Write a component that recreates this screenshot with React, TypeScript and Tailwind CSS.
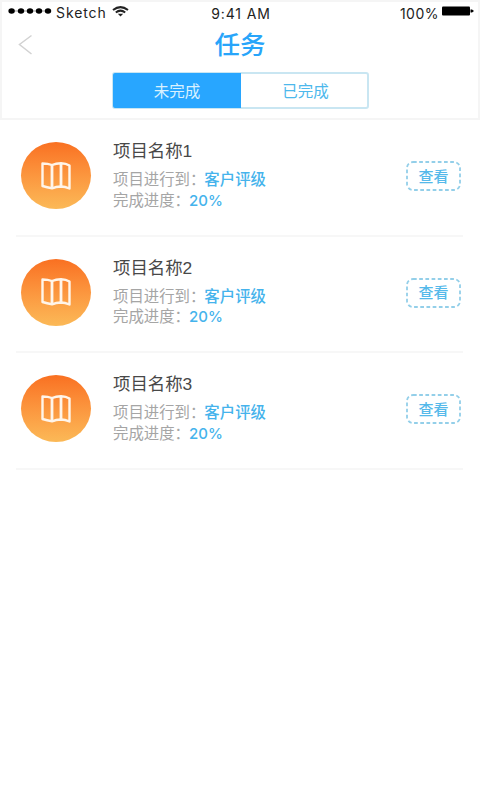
import { useState } from "react";

const tabs = ["未完成", "已完成"];

const projects = [
  { id: 1, name: "项目名称1", stage: "客户评级", progress: 20 },
  { id: 2, name: "项目名称2", stage: "客户评级", progress: 20 },
  { id: 3, name: "项目名称3", stage: "客户评级", progress: 20 },
];

const StatusBar = () => (
  <div className="flex h-[22px] items-center pl-[6px] pr-[4px] font-['Inter',sans-serif] text-[14px] leading-none text-[#222]">
    <div className="flex flex-1 items-center">
      <svg width="45" height="8" viewBox="0 0 45 8" className="-mt-1" fill="#000">
        <path d="M3 3.4h38v1.2H3z" opacity=".4" />
        <ellipse cx="3.6" cy="4" rx="3.2" ry="2.8" />
        <ellipse cx="13" cy="4" rx="3.2" ry="2.8" />
        <ellipse cx="22" cy="4" rx="3.2" ry="2.8" />
        <ellipse cx="31" cy="4" rx="3.2" ry="2.8" />
        <ellipse cx="40" cy="4" rx="3.2" ry="2.8" />
      </svg>
      <span className="ml-[3px] w-[50px] tracking-[0.9px]">Sketch</span>
      <svg width="17" height="11" viewBox="0 0 17 11" className="-mt-[3px] ml-[6px]" fill="none" stroke="#222" strokeWidth="2">
        <path d="M1 4Q8.5 -1.8 16 4" />
        <path d="M3.8 6.5Q8.5 2.8 13.2 6.5" />
        <path d="M5.8 7.8h5.4L8.5 10.5z" fill="#222" stroke="none" />
      </svg>
    </div>
    <span className="mt-[1px] tracking-[0.9px]">9:41 AM</span>
    <div className="flex flex-1 items-center justify-end">
      <span className="mt-[1px] tracking-[0.5px]">100%</span>
      <svg width="33" height="10" viewBox="0 0 33 10" className="-mt-1 ml-[2px]" fill="#000">
        <rect x="1" y="0.5" width="28" height="9" rx="1" />
        <path d="M29.5 3.5h1.5l2 1.5-2 1.5h-1.5z" />
      </svg>
    </div>
  </div>
);

const MapIcon = () => (
  <svg width="30" height="28" viewBox="0 0 30 28" fill="none" stroke="#fff5ea" strokeWidth="2.4" strokeLinejoin="round">
    <path d="M1.5 1.5Q7 1.500 11 3Q15 1.300 20 1.300Q25 1.500 28.500 3.500V26.500Q24 24.500 20 24.500Q15 24.800 11 26.300Q6 25.500 1.500 24z" />
    <path d="M11 3v23M20 1.500v23" strokeWidth="2.8" />
  </svg>
);

export default function App() {
  const [active, setActive] = useState(0);

  return (
    <div className="min-h-[800px] w-[480px] bg-white font-['Liberation_Sans','Noto_Sans_CJK_SC',sans-serif]">
      <header className="h-[120px] border-2 border-[#f5f5f5]">
        <StatusBar />
        <div className="grid h-[42px] grid-cols-[1fr_auto_1fr] items-center">
          <button className="pl-[16px]">
            <svg width="14" height="22" viewBox="0 0 14 22" fill="none" stroke="#d2d2d2" strokeWidth="1.5">
              <path d="M13.5 1.5L1.5 10.5 13.5 20" />
            </svg>
          </button>
          <h1 className="mt-[2px] text-[25.5px] font-medium leading-none text-[#28a5fa]">任务</h1>
        </div>
        <div className="ml-[110px] mt-[6px] flex h-[37px] w-[257px] rounded-[3px] border-2 border-[#c9e6f2]">
          {tabs.map((tab, i) => (
            <button
              key={tab}
              onClick={() => setActive(i)}
              className={
                i === active
                  ? "-my-px -ml-px w-[128px] rounded-l-[2px] bg-[#28a6ff] pt-[2px] text-[15.5px] leading-none text-[#d9f1ff]"
                  : "flex-1 pl-[3px] pt-[2px] text-[15.5px] leading-none text-[#4db8ec]"
              }
            >
              {tab}
            </button>
          ))}
        </div>
      </header>

      <ul className="pl-[16px] pr-[17px]">
        {projects.map((project) => (
          <li key={project.id} className="flex h-[116.5px] border-b-2 border-[#f7f7f7] pl-[5px] pt-[22px]">
            <div className="flex h-[67px] w-[70px] items-center justify-center rounded-[50%] bg-gradient-to-b from-[#f97021] to-[#fbb957]">
              <MapIcon />
            </div>
            <div className="-mt-px ml-[22px] flex-1 text-[15.4px] leading-[20.5px] text-[#a5a5a5]">
              <h2 className="mb-[9px] text-[17.4px] leading-[20px] text-[#484848]">{project.name}</h2>
              <p>
                项目进行到：<span className="-ml-px font-medium text-[#45b3ec]">{project.stage}</span>
              </p>
              <p>
                完成进度：
                <span className="-ml-px font-['Inter',sans-serif] text-[15px] font-medium leading-none text-[#45b3ec]">
                  {project.progress}%
                </span>
              </p>
            </div>
            <button className="relative mr-[2px] mt-[19px] h-[30px] w-[55px] text-[15px] font-medium leading-none text-[#55b9ea]">
              <svg className="absolute inset-0" width="55" height="30" viewBox="0 0 55 30" fill="none" stroke="#93cfe9" strokeWidth="1.8">
                <rect x="1" y="1" width="53" height="28" rx="6" strokeDasharray="3.7 2.5" />
              </svg>
              查看
            </button>
          </li>
        ))}
      </ul>
    </div>
  );
}
